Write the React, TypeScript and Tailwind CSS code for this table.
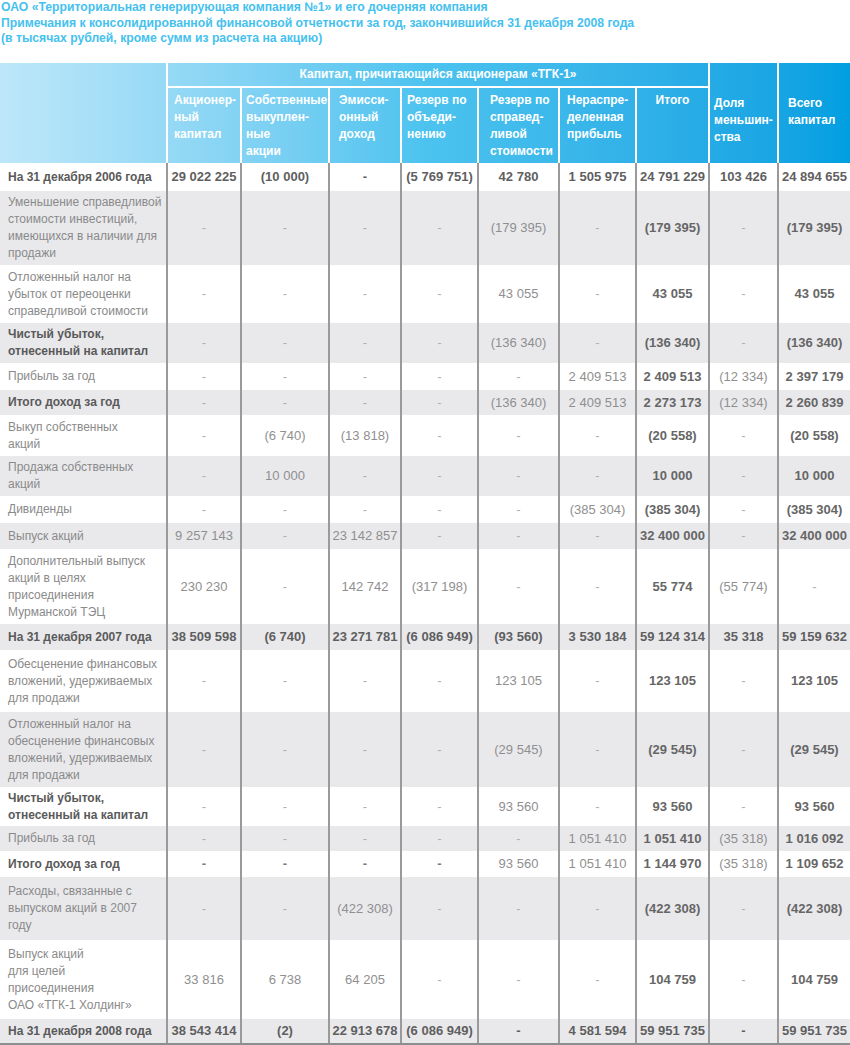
import React from "react";

type Row = {
  label: string[];
  values: string[];
  h: string;
  kind: "total" | "bold" | "plain";
  boldDash?: boolean;
};

const grid =
  "grid grid-cols-[166px_74px_88px_72px_77px_81px_77px_73px_69px_73px]";

const rows: Row[] = [
  {
    label: ["На 31 декабря 2006 года"],
    values: ["29 022 225", "(10 000)", "-", "(5 769 751)", "42 780", "1 505 975", "24 791 229", "103 426", "24 894 655"],
    h: "h-[28px]",
    kind: "total",
  },
  {
    label: ["Уменьшение справедливой", "стоимости инвестиций,", "имеющихся в наличии для", "продажи"],
    values: ["-", "-", "-", "-", "(179 395)", "-", "(179 395)", "-", "(179 395)"],
    h: "h-[74px]",
    kind: "plain",
  },
  {
    label: ["Отложенный налог на", "убыток от переоценки", "справедливой стоимости"],
    values: ["-", "-", "-", "-", "43 055", "-", "43 055", "-", "43 055"],
    h: "h-[58px]",
    kind: "plain",
  },
  {
    label: ["Чистый убыток,", "отнесенный на капитал"],
    values: ["-", "-", "-", "-", "(136 340)", "-", "(136 340)", "-", "(136 340)"],
    h: "h-[40px]",
    kind: "bold",
  },
  {
    label: ["Прибыль за год"],
    values: ["-", "-", "-", "-", "-", "2 409 513", "2 409 513", "(12 334)", "2 397 179"],
    h: "h-[27px]",
    kind: "plain",
  },
  {
    label: ["Итого доход за год"],
    values: ["-", "-", "-", "-", "(136 340)", "2 409 513", "2 273 173", "(12 334)", "2 260 839"],
    h: "h-[25px]",
    kind: "bold",
  },
  {
    label: ["Выкуп собственных", "акций"],
    values: ["-", "(6 740)", "(13 818)", "-", "-", "-", "(20 558)", "-", "(20 558)"],
    h: "h-[41px]",
    kind: "plain",
  },
  {
    label: ["Продажа собственных", "акций"],
    values: ["-", "10 000", "-", "-", "-", "-", "10 000", "-", "10 000"],
    h: "h-[40px]",
    kind: "plain",
  },
  {
    label: ["Дивиденды"],
    values: ["-", "-", "-", "-", "-", "(385 304)", "(385 304)", "-", "(385 304)"],
    h: "h-[27px]",
    kind: "plain",
  },
  {
    label: ["Выпуск акций"],
    values: ["9 257 143", "-", "23 142 857", "-", "-", "-", "32 400 000", "-", "32 400 000"],
    h: "h-[26px]",
    kind: "plain",
  },
  {
    label: ["Дополнительный выпуск", "акций в целях", "присоединения", "Мурманской ТЭЦ"],
    values: ["230 230", "-", "142 742", "(317 198)", "-", "-", "55 774", "(55 774)", "-"],
    h: "h-[75px]",
    kind: "plain",
  },
  {
    label: ["На 31 декабря 2007 года"],
    values: ["38 509 598", "(6 740)", "23 271 781", "(6 086 949)", "(93 560)", "3 530 184", "59 124 314", "35 318", "59 159 632"],
    h: "h-[26px]",
    kind: "total",
  },
  {
    label: ["Обесценение финансовых", "вложений, удерживаемых", "для продажи"],
    values: ["-", "-", "-", "-", "123 105", "-", "123 105", "-", "123 105"],
    h: "h-[62px]",
    kind: "plain",
  },
  {
    label: ["Отложенный налог на", "обесценение финансовых", "вложений, удерживаемых", "для продажи"],
    values: ["-", "-", "-", "-", "(29 545)", "-", "(29 545)", "-", "(29 545)"],
    h: "h-[75px]",
    kind: "plain",
  },
  {
    label: ["Чистый убыток,", "отнесенный на капитал"],
    values: ["-", "-", "-", "-", "93 560", "-", "93 560", "-", "93 560"],
    h: "h-[39px]",
    kind: "bold",
  },
  {
    label: ["Прибыль за год"],
    values: ["-", "-", "-", "-", "-", "1 051 410", "1 051 410", "(35 318)", "1 016 092"],
    h: "h-[25px]",
    kind: "plain",
  },
  {
    label: ["Итого доход за год"],
    values: ["-", "-", "-", "-", "93 560", "1 051 410", "1 144 970", "(35 318)", "1 109 652"],
    h: "h-[26px]",
    kind: "bold",
    boldDash: true,
  },
  {
    label: ["Расходы, связанные с", "выпуском акций в 2007", "году"],
    values: ["-", "-", "(422 308)", "-", "-", "-", "(422 308)", "-", "(422 308)"],
    h: "h-[63px]",
    kind: "plain",
  },
  {
    label: ["Выпуск акций", "для целей", "присоединения", "ОАО «ТГК-1 Холдинг»"],
    values: ["33 816", "6 738", "64 205", "-", "-", "-", "104 759", "-", "104 759"],
    h: "h-[79px]",
    kind: "plain",
  },
  {
    label: ["На 31 декабря 2008 года"],
    values: ["38 543 414", "(2)", "22 913 678", "(6 086 949)", "-", "4 581 594", "59 951 735", "-", "59 951 735"],
    h: "h-[24px]",
    kind: "total",
  },
];

function valueClass(row: Row, i: number, v: string) {
  if (row.kind === "total") return "font-bold text-[#5f5f5f]";
  if (v === "-") {
    if (row.boldDash && i < 4) return "font-bold text-[#7a7a7a]";
    return "text-[#b0b0b0]";
  }
  if (i === 6 || i === 8) return "font-bold text-[#666666]";
  return "text-[#8f8f8f]";
}

function Header() {
  return (
    <div
      className={`${grid} grid-rows-[25px_75px] bg-linear-to-r from-[#bde7f9] via-[#4cc3ef] to-[#009fe1] text-[12px] leading-[17px] font-bold text-white`}
    >
      <div className="row-span-2" />
      <div className="col-span-7 flex items-center justify-center border-b-2 border-l-2 border-white">
        Капитал, причитающийся акционерам «ТГК-1»
      </div>
      <div className="row-span-2 border-l-2 border-white pl-[4px] pt-[32px]">
        Доля
        <br />
        меньшин-
        <br />
        ства
      </div>
      <div className="row-span-2 border-l-2 border-white pl-[9px] pt-[32px]">
        Всего
        <br />
        капитал
      </div>
      <div className="border-l-2 border-white pl-[6px] pt-[4px]">
        Акционер-
        <br />
        ный
        <br />
        капитал
      </div>
      <div className="border-l-2 border-white pl-[4px] pt-[4px]">
        Собственные
        <br />
        выкуплен-
        <br />
        ные
        <br />
        акции
      </div>
      <div className="border-l-2 border-white pl-[9px] pt-[4px]">
        Эмисси-
        <br />
        онный
        <br />
        доход
      </div>
      <div className="border-l-2 border-white pl-[5px] pt-[4px]">
        Резерв по
        <br />
        объеди-
        <br />
        нению
      </div>
      <div className="border-l-2 border-white pl-[11px] pt-[4px]">
        Резерв по
        <br />
        справед-
        <br />
        ливой
        <br />
        стоимости
      </div>
      <div className="border-l-2 border-white pl-[7px] pt-[4px]">
        Нераспре-
        <br />
        деленная
        <br />
        прибыль
      </div>
      <div className="border-l-2 border-white pt-[4px] text-center">Итого</div>
    </div>
  );
}

export default function App() {
  return (
    <div className="w-[850px] bg-white font-['Liberation_Sans',Arial,sans-serif]">
      <div className="h-[63px] pl-px text-[12.2px] leading-[15.5px] font-bold text-[#45c1ee]">
        <p>ОАО «Территориальная генерирующая компания №1» и его дочерняя компания</p>
        <p>Примечания к консолидированной финансовой отчетности за год, закончившийся 31 декабря 2008 года</p>
        <p>(в тысячах рублей, кроме сумм из расчета на акцию)</p>
      </div>
      <Header />
      <div className="border-b-2 border-[#8e8e8e]">
        {rows.map((row, r) => (
          <div
            key={r}
            className={`${grid} ${row.h} ${r % 2 === 1 ? "bg-[#e9e9ec]" : "bg-white"}`}
          >
            <div
              className={`flex flex-col justify-center pl-2 text-[12px] leading-[17px] whitespace-nowrap ${
                row.kind === "plain" ? "text-[#8a8a8a]" : "font-bold text-[#5a5a5a]"
              }`}
            >
              {row.label.map((l) => (
                <span key={l}>{l}</span>
              ))}
            </div>
            {row.values.map((v, i) => (
              <div
                key={i}
                className={`flex items-center justify-center border-l-2 border-[#9a9a9a] text-[13px] whitespace-nowrap ${valueClass(
                  row,
                  i,
                  v
                )}`}
              >
                {v}
              </div>
            ))}
          </div>
        ))}
      </div>
    </div>
  );
}
